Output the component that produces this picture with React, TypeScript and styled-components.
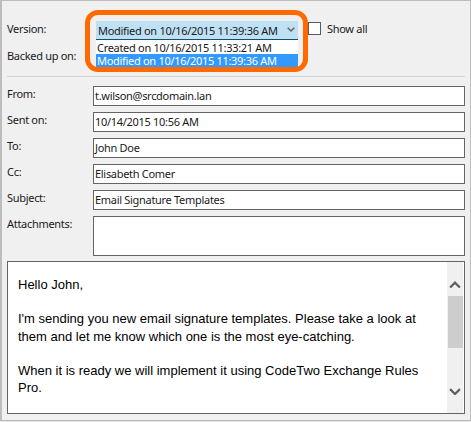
import React from "react";
import styled, { createGlobalStyle } from "styled-components";

const Global = createGlobalStyle`
  html, body { margin: 0; padding: 0; background: #e4e4e4; }
  #root { width: 471px; height: 422px; overflow: hidden; }
`;

const Frame = styled.div`
  position: relative;
  box-sizing: border-box;
  width: 471px;
  height: 421px;
  padding: 10px 5px 0 5px;
  background: #f0f0f0;
  border: 1px solid #bdbdbd;
  border-width: 1px 1px 1px 2px;
  font-family: "Noto Sans", sans-serif;
  font-size: 11px;
  letter-spacing: -0.3px;
  color: #1a1a1a;
`;

const VersionArea = styled.div`
  display: grid;
  grid-template-columns: 89px 202px auto;
  grid-template-rows: 30px 28px;
  height: 65px;
  border-bottom: 1px solid #d2d2d2;
`;

const Label = styled.div<{ $top?: number }>`
  grid-column: 1;
  padding-top: ${(p) => p.$top ?? 0}px;
  line-height: 16px;
  white-space: nowrap;
`;

const Combo = styled.div`
  grid-column: 2;
  grid-row: 1 / span 2;
  padding-top: 10px;
`;

const ComboHead = styled.div`
  display: flex;
  align-items: center;
  justify-content: space-between;
  box-sizing: border-box;
  height: 19px;
  padding: 0 3px 0 2px;
  background: #c0e1f4;
  border-bottom: 1px solid #14506e;
  white-space: nowrap;
`;

const ComboList = styled.div`
  background: #fff;
  padding-top: 1px;
`;

const ComboItem = styled.div<{ $active?: boolean }>`
  height: 13px;
  line-height: 13px;
  padding-left: 1px;
  white-space: nowrap;
  background: ${(p) => (p.$active ? "#3399ff" : "transparent")};
  color: ${(p) => (p.$active ? "#fff" : "inherit")};
`;

const ShowAll = styled.label`
  grid-column: 3;
  grid-row: 1;
  display: flex;
  align-items: flex-start;
  gap: 6px;
  padding: 10px 0 0 10px;
  line-height: 16px;
`;

const Check = styled.span`
  box-sizing: border-box;
  width: 13px;
  height: 13px;
  margin-top: 1px;
  background: #fff;
  border: 1px solid #5a5a5a;
`;

const Highlight = styled.div`
  position: absolute;
  left: 83px;
  top: 9px;
  width: 223px;
  height: 62px;
  box-sizing: border-box;
  border: 5px solid #ff6a00;
  border-radius: 13px;
  pointer-events: none;
`;

const Fields = styled.div`
  display: grid;
  grid-template-columns: 86px 1fr;
  row-gap: 6px;
  padding-top: 9px;
`;

const Input = styled.div<{ $tall?: boolean }>`
  box-sizing: border-box;
  height: ${(p) => (p.$tall ? "40px" : "20px")};
  line-height: 17px;
  padding-left: 1px;
  background: #fff;
  border: 1px solid #646464;
  white-space: nowrap;
`;

const FieldLabel = styled(Label)`
  padding-top: 0;
`;

const Body = styled.div`
  display: flex;
  box-sizing: border-box;
  height: 153px;
  margin-top: 5px;
  padding-right: 1px;
  background: #fff;
  border: 1px solid #646464;
`;

const Message = styled.div`
  flex: 1;
  padding: 14px 22px 0 10px;
  font-family: "Liberation Sans", Arial, sans-serif;
  font-size: 13px;
  letter-spacing: 0;
  line-height: 17.2px;
  color: #000;
`;

const Para = styled.p`
  margin: 0 0 17.2px;
`;

const Scrollbar = styled.div`
  display: flex;
  flex-direction: column;
  width: 16px;
  background: #f0f0f0;
`;

const ScrollButton = styled.div<{ $up?: boolean }>`
  display: flex;
  align-items: center;
  justify-content: center;
  height: 17px;
  margin: ${(p) => (p.$up ? "14px 0 3px" : "0 0 13px")};
`;

const Track = styled.div`
  flex: 1;
`;

const Thumb = styled.div`
  width: 15px;
  height: 52px;
  margin-left: 1px;
  background: #cdcdcd;
`;

const Chevron = ({ up, w = 12 }: { up?: boolean; w?: number }) => (
  <svg width={w} height={w * 0.64} viewBox="0 0 11 7" aria-hidden="true">
    <path d={up ? "M1 6 L5.5 1.5 L10 6" : "M1 1 L5.5 5.5 L10 1"} fill="none" stroke="#606060" strokeWidth="2" />
  </svg>
);

const fields: [string, string][] = [
  ["From:", "t.wilson@srcdomain.lan"],
  ["Sent on:", "10/14/2015 10:56 AM"],
  ["To:", "John Doe"],
  ["Cc:", "Elisabeth Comer"],
  ["Subject:", "Email Signature Templates"],
];

export default function App() {
  return (
    <Frame>
      <Global />
      <VersionArea>
        <Label $top={10}>Version:</Label>
        <Combo>
          <ComboHead>
            Modified on 10/16/2015 11:39:36 AM
            <Chevron w={8} />
          </ComboHead>
          <ComboList>
            <ComboItem>Created on 10/16/2015 11:33:21 AM</ComboItem>
            <ComboItem $active>Modified on 10/16/2015 11:39:36 AM</ComboItem>
          </ComboList>
        </Combo>
        <ShowAll>
          <Check />
          Show all
        </ShowAll>
        <Label $top={7}>Backed up on:</Label>
      </VersionArea>
      <Highlight />
      <Fields>
        {fields.map(([l, v]) => (
          <React.Fragment key={l}>
            <FieldLabel>{l}</FieldLabel>
            <Input>{v}</Input>
          </React.Fragment>
        ))}
        <FieldLabel>Attachments:</FieldLabel>
        <Input $tall />
      </Fields>
      <Body>
        <Message>
          <Para>Hello John,</Para>
          <Para>
            I'm sending you new email signature templates. Please take a look at them and let me know which one is the most eye-catching.
          </Para>
          <Para>When it is ready we will implement it using CodeTwo Exchange Rules Pro.</Para>
        </Message>
        <Scrollbar>
          <ScrollButton $up>
            <Chevron up />
          </ScrollButton>
          <Track>
            <Thumb />
          </Track>
          <ScrollButton>
            <Chevron />
          </ScrollButton>
        </Scrollbar>
      </Body>
    </Frame>
  );
}
